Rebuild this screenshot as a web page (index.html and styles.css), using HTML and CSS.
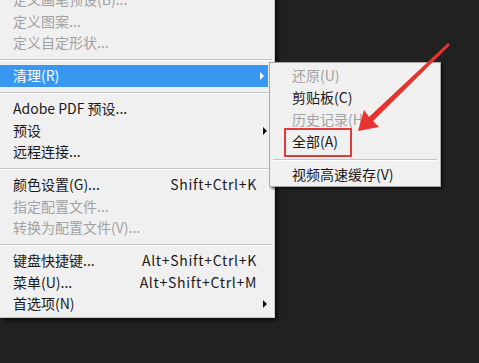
FILE: index.html
```html
<!DOCTYPE html>
<html lang="zh-CN">
<head>
<meta charset="utf-8">
<link rel="stylesheet" href="styles.css">
</head>
<body>
<div class="stage">
  <div class="menu">
    <div class="item disabled"><span class="label">定义画笔预设(B)...</span></div>
    <div class="item disabled"><span class="label">定义图案...</span></div>
    <div class="item disabled"><span class="label">定义自定形状...</span></div>
    <div class="sep"></div>
    <div class="item active"><span class="label">清理(R)</span><span class="key"></span><span class="arrow"></span></div>
    <div class="sep"></div>
    <div class="item"><span class="label">Adobe PDF 预设...</span></div>
    <div class="item"><span class="label">预设</span><span class="key"></span><span class="arrow"></span></div>
    <div class="item"><span class="label">远程连接...</span></div>
    <div class="sep"></div>
    <div class="item"><span class="label">颜色设置(G)...</span><span class="key">Shift+Ctrl+K</span></div>
    <div class="item disabled"><span class="label">指定配置文件...</span></div>
    <div class="item disabled"><span class="label">转换为配置文件(V)...</span></div>
    <div class="sep"></div>
    <div class="item"><span class="label">键盘快捷键...</span><span class="key">Alt+Shift+Ctrl+K</span></div>
    <div class="item"><span class="label">菜单(U)...</span><span class="key">Alt+Shift+Ctrl+M</span></div>
    <div class="item"><span class="label">首选项(N)</span><span class="key"></span><span class="arrow"></span></div>
  </div>

  <div class="submenu">
    <div class="sitem disabled">还原(U)</div>
    <div class="sitem">剪贴板(C)</div>
    <div class="sitem disabled">历史记录(H)</div>
    <div class="sitem">全部(A)</div>
    <div class="ssep"></div>
    <div class="sitem">视频高速缓存(V)</div>
    <div class="redbox"></div>
  </div>

  <svg class="pointer" width="479" height="363" viewBox="0 0 479 363">
    <polygon points="358,131 379,127 373,121 450,45 448,43 369,117 364,110" fill="#e8322f"/>
  </svg>
</div>
</body>
</html>
```

FILE: styles.css
```css
html, body {
  margin: 0;
  padding: 0;
  background: #212121;
}

body {
  width: 479px;
  height: 363px;
  overflow: hidden;
  font-family: "Noto Sans CJK SC", "Noto Sans", sans-serif;
  font-size: 14px;
}

.stage {
  position: relative;
  display: flow-root;
  width: 479px;
  height: 363px;
}

.menu {
  width: 274px;
  margin-top: -10.75px;
  padding-bottom: 2px;
  background: #f0f0f0;
  border-right: 1px solid #c8c8c8;
  border-bottom: 1px solid #c8c8c8;
  box-shadow: 3px 3px 3px rgba(0, 0, 0, 0.55);
  display: flex;
  flex-direction: column;
}

.item {
  height: 21.5px;
  display: grid;
  grid-template-columns: 1fr auto 16px;
  align-items: center;
  padding-left: 13px;
  padding-right: 1px;
  color: #1a1a1a;
  line-height: 21.5px;
  white-space: nowrap;
}

.item.disabled {
  color: #a2a2a2;
}

.item.active {
  background: #3797f1;
  color: #ffffff;
  margin-right: 6px;
}

.key {
  text-align: right;
  letter-spacing: 0.7px;
}

.arrow {
  justify-self: center;
  width: 0;
  height: 0;
  border-top: 4px solid transparent;
  border-bottom: 4px solid transparent;
  border-left: 4px solid #111;
}

.item.active .arrow {
  border-left-color: #ffffff;
  margin-left: 6px;
}

.sep {
  height: 1px;
  margin: 4.75px 2px 4.75px 0;
  background: #c4c4c4;
  border-bottom: 1px solid #ffffff;
}

.submenu {
  position: absolute;
  left: 269px;
  top: 62px;
  width: 170px;
  padding: 1px 0 1px 0;
  background: #f0f0f0;
  border: 1px solid #a8a8a8;
  box-shadow: 2px 2px 2px rgba(0, 0, 0, 0.5);
}

.sitem {
  height: 22px;
  line-height: 22px;
  padding-left: 22px;
  color: #1a1a1a;
  white-space: nowrap;
}

.sitem.disabled {
  color: #a2a2a2;
}

.ssep {
  height: 1px;
  margin: 7px 3px 2px 3px;
  background: #c4c4c4;
  border-bottom: 1px solid #ffffff;
}

.redbox {
  position: absolute;
  left: 14px;
  top: 65px;
  width: 64px;
  height: 25px;
  border: 2px solid #e03a3a;
}

.pointer {
  position: absolute;
  left: 0;
  top: 0;
  pointer-events: none;
}
```
